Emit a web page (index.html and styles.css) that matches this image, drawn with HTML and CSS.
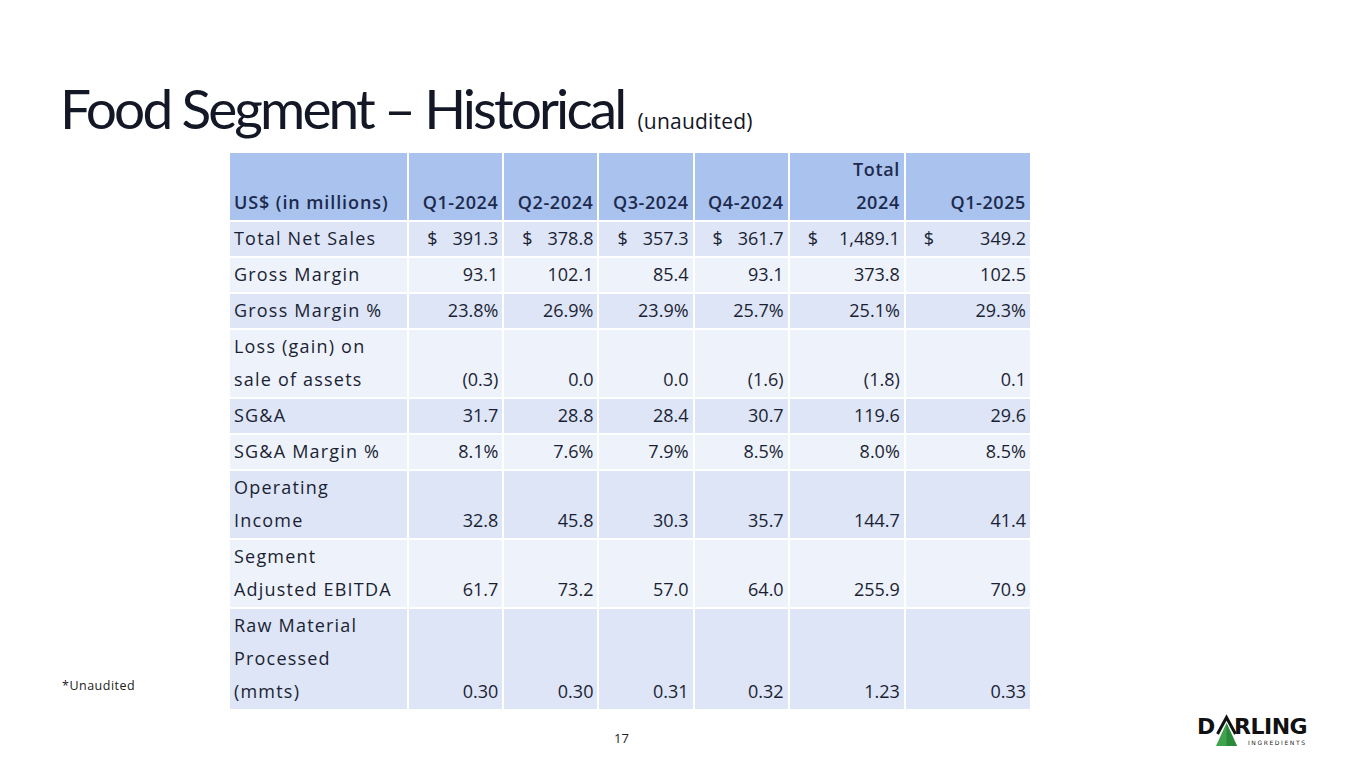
FILE: index.html
```html
<!DOCTYPE html>
<html lang="en">
<head>
<meta charset="utf-8">
<title>Food Segment – Historical</title>
<link rel="stylesheet" href="styles.css">
</head>
<body>
<div class="slide">
  <h1 class="title">Food Segment – Historical <span class="sub">(unaudited)</span></h1>
  <div class="content">
    <div class="note">*Unaudited</div>
    <table class="fin">
      <colgroup>
        <col class="c-label"><col class="c-q"><col class="c-q"><col class="c-q"><col class="c-q4"><col class="c-tot"><col class="c-q25">
      </colgroup>
      <thead>
        <tr class="r2">
          <th class="lbl">US$ (in millions)</th>
          <th>Q1-2024</th><th>Q2-2024</th><th>Q3-2024</th><th>Q4-2024</th><th>Total<br>2024</th><th>Q1-2025</th>
        </tr>
      </thead>
      <tbody>
        <tr class="odd r1">
          <td class="lbl">Total Net Sales</td>
          <td><span class="cur">$</span>391.3</td>
          <td><span class="cur">$</span>378.8</td>
          <td><span class="cur">$</span>357.3</td>
          <td><span class="cur">$</span>361.7</td>
          <td><span class="cur">$</span>1,489.1</td>
          <td><span class="cur">$</span>349.2</td>
        </tr>
        <tr class="even r1">
          <td class="lbl">Gross Margin</td><td>93.1</td><td>102.1</td><td>85.4</td><td>93.1</td><td>373.8</td><td>102.5</td>
        </tr>
        <tr class="odd r1">
          <td class="lbl">Gross Margin %</td><td>23.8%</td><td>26.9%</td><td>23.9%</td><td>25.7%</td><td>25.1%</td><td>29.3%</td>
        </tr>
        <tr class="even r2">
          <td class="lbl">Loss (gain) on<br>sale of assets</td><td>(0.3)</td><td>0.0</td><td>0.0</td><td>(1.6)</td><td>(1.8)</td><td>0.1</td>
        </tr>
        <tr class="odd r1">
          <td class="lbl">SG&amp;A</td><td>31.7</td><td>28.8</td><td>28.4</td><td>30.7</td><td>119.6</td><td>29.6</td>
        </tr>
        <tr class="even r1">
          <td class="lbl">SG&amp;A Margin %</td><td>8.1%</td><td>7.6%</td><td>7.9%</td><td>8.5%</td><td>8.0%</td><td>8.5%</td>
        </tr>
        <tr class="odd r2">
          <td class="lbl">Operating<br>Income</td><td>32.8</td><td>45.8</td><td>30.3</td><td>35.7</td><td>144.7</td><td>41.4</td>
        </tr>
        <tr class="even r2">
          <td class="lbl">Segment<br>Adjusted EBITDA</td><td>61.7</td><td>73.2</td><td>57.0</td><td>64.0</td><td>255.9</td><td>70.9</td>
        </tr>
        <tr class="odd r3">
          <td class="lbl">Raw Material<br>Processed<br>(mmts)</td><td>0.30</td><td>0.30</td><td>0.31</td><td>0.32</td><td>1.23</td><td>0.33</td>
        </tr>
      </tbody>
    </table>
  </div>
  <div class="footer">
    <div class="pagenum">17</div>
    <div class="logo">
      <svg width="118" height="40" viewBox="0 0 118 40" aria-label="Darling Ingredients">
        <text x="0" y="21" class="lg-big">D</text>
        <path d="M20.5 21 L29.5 4.5 L38.5 21" fill="none" stroke="#111" stroke-width="3" stroke-linejoin="miter"/>
        <polygon points="29.5,10 19,33 40,33" fill="#3fa34d"/>
        <polygon points="29.5,10 29.5,33 40,33" fill="#2a8a3a"/>
        <text x="37" y="21" class="lg-big">RLING</text>
        <text x="51" y="32" class="lg-small">INGREDIENTS</text>
      </svg>
    </div>
  </div>
</div>
</body>
</html>
```

FILE: styles.css
```css
* { box-sizing: border-box; }
html, body { margin: 0; padding: 0; background: #ffffff; }
body {
  width: 1365px;
  height: 768px;
  overflow: hidden;
  font-family: "Open Sans", "Noto Sans", "Liberation Sans", sans-serif;
  color: #1b1f33;
}
.slide {
  width: 1365px;
  height: 768px;
  display: flex;
  flex-direction: column;
}
.title {
  margin: 70px 0 0 60px;
  font-family: "Lato", "Noto Sans", sans-serif;
  font-size: 55px;
  font-weight: 400;
  letter-spacing: -2.9px;
  line-height: 76px;
  height: 82px;
  color: #131726;
  white-space: nowrap;
}
.title .sub {
  font-family: "Open Sans", "Noto Sans", sans-serif;
  font-size: 21px;
  letter-spacing: 0.2px;
  margin-left: 2px;
}
.content {
  display: flex;
  align-items: flex-end;
}
.note {
  flex: 0 0 230px;
  padding-left: 62px;
  font-size: 12.5px;
  letter-spacing: 0.5px;
  margin-bottom: 17px;
  color: #222;
  white-space: nowrap;
}
.fin {
  flex: 0 0 auto;
  border-collapse: separate;
  border-spacing: 2px;
  font-size: 18px;
  line-height: 33px;
  table-layout: fixed;
  width: 804px;
  margin-left: -2px;
  margin-top: -1px;
}
.c-label { width: 177px; }
.c-q { width: 93px; }
.c-q4 { width: 93px; }
.c-tot { width: 114px; }
.c-q25 { width: 124px; }
.fin th, .fin td {
  padding: 0 4px 1px 4px;
  vertical-align: bottom;
  text-align: right;
  white-space: nowrap;
}
.fin tr.r1 > * { height: 34px; }
.fin tr.r2 > * { height: 66px; }
.fin tr.r3 > * { height: 100px; }
.fin th {
  background: #a9c3ee;
  font-weight: 600;
  color: #1d2a4d;
  letter-spacing: 0.6px;
}
.fin th.lbl { text-align: left; letter-spacing: 0.9px; }
.fin td.lbl { text-align: left; letter-spacing: 1.2px; }
.fin tr.odd td { background: #dde5f7; }
.fin tr.even td { background: #eef2fb; }
.cur {
  float: left;
  padding-left: 14px;
}
.footer {
  margin-top: auto;
  height: 62px;
  display: flex;
  align-items: flex-start;
}
.pagenum {
  margin-left: 614px;
  margin-top: 18px;
  font-size: 13px;
  color: #222;
}
.logo {
  margin-left: auto;
  margin-right: 50px;
  margin-top: 2px;
}
.lg-big {
  font-family: "DejaVu Sans", "Liberation Sans", sans-serif;
  font-weight: 700;
  font-size: 22px;
  fill: #111;
  letter-spacing: -0.5px;
}
.lg-small {
  font-family: "DejaVu Sans", "Liberation Sans", sans-serif;
  font-size: 6px;
  letter-spacing: 1.6px;
  fill: #222;
}
```
